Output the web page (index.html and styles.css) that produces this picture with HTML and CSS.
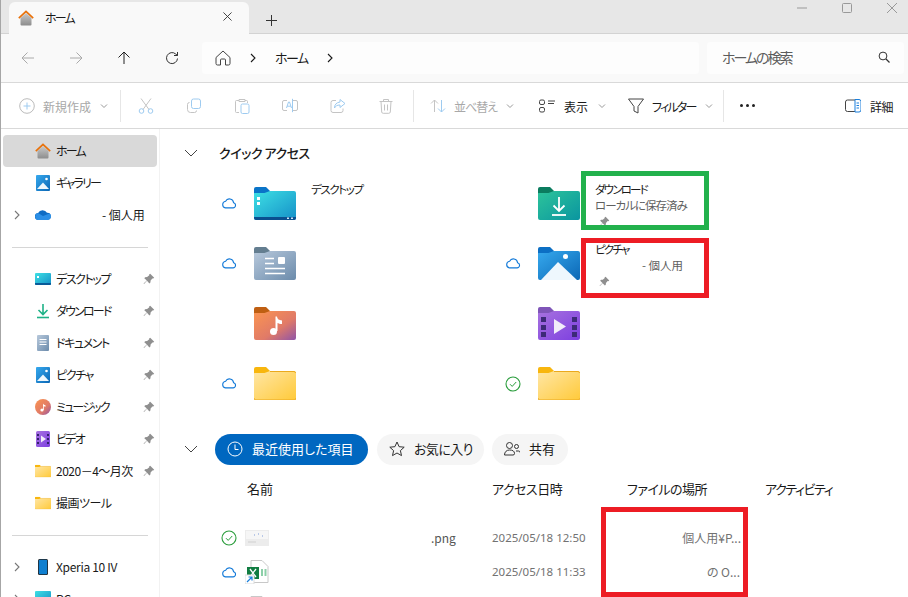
FILE: index.html
```html
<!DOCTYPE html>
<html lang="ja">
<head>
<meta charset="utf-8">
<title>ホーム</title>
<link rel="stylesheet" href="styles.css">
</head>
<body>
<svg class="defs" width="0" height="0" aria-hidden="true">
  <defs>
    <linearGradient id="gYellow" x1="0" y1="0" x2="1" y2="1"><stop offset="0" stop-color="#ffe6a5"/><stop offset="1" stop-color="#ffca3a"/></linearGradient>
    <linearGradient id="gDesk" x1="0" y1="0" x2="1" y2="1"><stop offset="0" stop-color="#3ee0e4"/><stop offset="1" stop-color="#1590c8"/></linearGradient>
    <linearGradient id="gDoc" x1="0" y1="0" x2="1" y2="1"><stop offset="0" stop-color="#b8c9dc"/><stop offset="1" stop-color="#6b8bab"/></linearGradient>
    <linearGradient id="gMusic" x1="0" y1="0" x2="1" y2="1"><stop offset="0" stop-color="#fb9550"/><stop offset=".6" stop-color="#e07a68"/><stop offset="1" stop-color="#8f54a8"/></linearGradient>
    <linearGradient id="gVideo" x1="0" y1="0" x2="1" y2="1"><stop offset="0" stop-color="#a772df"/><stop offset="1" stop-color="#7d3fe0"/></linearGradient>
    <linearGradient id="gDown" x1="0" y1="0" x2="1" y2="1"><stop offset="0" stop-color="#2dc49a"/><stop offset="1" stop-color="#0a95a0"/></linearGradient>
    <linearGradient id="gPic" x1="0" y1="0" x2="1" y2="1"><stop offset="0" stop-color="#36a9ee"/><stop offset="1" stop-color="#0b67b5"/></linearGradient>
    <linearGradient id="gHome" x1="0" y1="0" x2="0" y2="1"><stop offset="0" stop-color="#c9c9c9"/><stop offset="1" stop-color="#8d8d8d"/></linearGradient>
  </defs>
  <symbol id="chevR" viewBox="0 0 10 10"><path d="M3 1l4 4-4 4" fill="none" stroke="currentColor" stroke-width="1.100"/></symbol>
  <symbol id="chevD" viewBox="0 0 14 8"><path d="M1 1l6 6 6-6" fill="none" stroke="currentColor" stroke-width="1"/></symbol>
  <symbol id="chevS" viewBox="0 0 8 6"><path d="M1 1.500l3 3 3-3" fill="none" stroke="currentColor" stroke-width="1"/></symbol>
  <symbol id="pin" viewBox="0 0 12 12"><path d="M7.200.8l4 4-1 .8-.8-.2L7.600 7.600l-.2 2-1 .8-2.400-2.600L1 11l-.4-.4 3.200-3L1.300 5.200l.8-1 2-.2 2.200-1.800-.2-.8z" fill="#8f8f8f"/></symbol>
  <symbol id="cloud" viewBox="0 0 18 14"><path d="M5 12.500h8.500a3 3 0 0 0 .6-5.900A4.700 4.700 0 0 0 5.200 5 3.800 3.800 0 0 0 5 12.500z" fill="none" stroke="#1078d8" stroke-width="1.200"/></symbol>
  <symbol id="check" viewBox="0 0 16 16"><circle cx="8" cy="8" r="7" fill="none" stroke="#2a9d3c" stroke-width="1.100"/><path d="M5 8.200l2.200 2.200L11.200 6" fill="none" stroke="#2a9d3c" stroke-width="1"/></symbol>
  <symbol id="home" viewBox="0 0 16 16"><path d="M2.500 8v6.500a1 1 0 0 0 1 1h9a1 1 0 0 0 1-1V8L8 3z" fill="url(#gHome)"/><path d="M.8 8.200L8 1.500l7.200 6.700" fill="none" stroke="#e8710a" stroke-width="1.700"/></symbol>
  <symbol id="folder" viewBox="0 0 42 33"><path d="M0 2a2 2 0 0 1 2-2h10l4 4v6H0z" fill="#f8b60e"/><path d="M0 6.500q0-.5.500-.5h10L16 4h24a2 2 0 0 1 2 2v25a2 2 0 0 1-2 2H2a2 2 0 0 1-2-2z" fill="url(#gYellow)"/><path d="M0 31a2 2 0 0 0 2 2h38a2 2 0 0 0 2-2" fill="none" stroke="#eaa91d"/><path d="M16 4.500h24a1.500 1.500 0 0 1 1.500 1.500" fill="none" stroke="#eaa91d"/></symbol>
  <symbol id="fDesk" viewBox="0 0 42 33"><path d="M0 2a2 2 0 0 1 2-2h10l4 4v6H0z" fill="#0a74c8"/><path d="M0 6.500q0-.5.500-.5h10L16 4h24a2 2 0 0 1 2 2v25a2 2 0 0 1-2 2H2a2 2 0 0 1-2-2z" fill="url(#gDesk)"/><path d="M0 30h42v1a2 2 0 0 1-2 2H2a2 2 0 0 1-2-2z" fill="#0a4f8f"/><rect x="3" y="10" width="3" height="3" fill="#fff"/><rect x="3" y="15" width="3" height="3" fill="#fff"/><rect x="33" y="30.500" width="2" height="1.500" fill="#cfe6f5"/><rect x="37" y="30.500" width="2" height="1.500" fill="#cfe6f5"/></symbol>
  <symbol id="fDoc" viewBox="0 0 42 33"><path d="M0 2a2 2 0 0 1 2-2h10l4 4v6H0z" fill="#647e90"/><path d="M0 6.500q0-.5.500-.5h10L16 4h24a2 2 0 0 1 2 2v25a2 2 0 0 1-2 2H2a2 2 0 0 1-2-2z" fill="url(#gDoc)"/><path d="M11 11.500h9M11 16.500h9M11 21.500h20M11 26.500h20" stroke="#fff" stroke-width="1.600"/><rect x="24" y="10" width="7" height="7" rx="1" fill="#fff"/></symbol>
  <symbol id="fMusic" viewBox="0 0 42 33"><path d="M0 2a2 2 0 0 1 2-2h10l4 4v6H0z" fill="#bf5f12"/><path d="M0 6.500q0-.5.500-.5h10L16 4h24a2 2 0 0 1 2 2v25a2 2 0 0 1-2 2H2a2 2 0 0 1-2-2z" fill="url(#gMusic)"/><circle cx="19.500" cy="24.500" r="3.500" fill="#fff"/><path d="M21.500 24V9.500h1.500c.5 3 2 3.500 5 4v3.500c-2 0-3.500-.5-4.500-1V24z" fill="#fff"/></symbol>
  <symbol id="fVideo" viewBox="0 0 42 33"><path d="M0 2a2 2 0 0 1 2-2h10l4 4v6H0z" fill="#7f55b8"/><path d="M0 6.500q0-.5.500-.5h10L16 4h24a2 2 0 0 1 2 2v25a2 2 0 0 1-2 2H2a2 2 0 0 1-2-2z" fill="url(#gVideo)"/><path d="M3 10h5v5H3zM3 18h5v5H3zM3 25h5v5H3zM34 10h5v5h-5zM34 18h5v5h-5zM34 25h5v5h-5z" fill="#3d2a78"/><path d="M16 12l12 7.500L16 27z" fill="#f1edf9"/></symbol>
  <symbol id="fDown" viewBox="0 0 42 33"><path d="M0 2a2 2 0 0 1 2-2h10l4 4v6H0z" fill="#0b7c5f"/><path d="M0 6.500q0-.5.500-.5h10L16 4h24a2 2 0 0 1 2 2v25a2 2 0 0 1-2 2H2a2 2 0 0 1-2-2z" fill="url(#gDown)"/><path d="M21 10v14M15.500 18.500L21 24l5.500-5.500" fill="none" stroke="#fff" stroke-width="1.800"/><path d="M14 28h14" stroke="#fff" stroke-width="1.800"/></symbol>
  <symbol id="fPic" viewBox="0 0 42 33"><path d="M0 2a2 2 0 0 1 2-2h10l4 4v6H0z" fill="#0c6fc4"/><path d="M0 6.500q0-.5.500-.5h10L16 4h24a2 2 0 0 1 2 2v25a2 2 0 0 1-2 2H2a2 2 0 0 1-2-2z" fill="url(#gPic)"/><path d="M3 33L20 15l19 18z" fill="#eef7fd"/><circle cx="27.500" cy="9.500" r="2.500" fill="#fff"/></symbol>
  <symbol id="sDesk" viewBox="0 0 16 12"><rect width="16" height="12" rx="1" fill="url(#gDesk)"/><path d="M0 10h16v1a1 1 0 0 1-1 1H1a1 1 0 0 1-1-1z" fill="#0a5a98"/><rect x="2" y="3" width="2" height="2" fill="#fff"/></symbol>
  <symbol id="sDown" viewBox="0 0 16 16"><path d="M8 1v10M3.500 7L8 11.500 12.500 7" fill="none" stroke="#1fb287" stroke-width="1.600"/><path d="M2 14.500h12" stroke="#1fb287" stroke-width="1.600"/></symbol>
  <symbol id="sDoc" viewBox="0 0 12 16"><rect width="12" height="16" rx="1" fill="url(#gDoc)"/><path d="M2.500 4.500h7M2.500 7h7M2.500 9.500h7" stroke="#fff"/></symbol>
  <symbol id="sPic" viewBox="0 0 16 16"><rect width="14" height="16" x="1" rx="1" fill="url(#gPic)"/><path d="M2 14L8 7.500 14 14z" fill="#eef7fd"/><circle cx="11.500" cy="4" r="1.300" fill="#fff"/></symbol>
  <symbol id="sMusic" viewBox="0 0 16 16"><circle cx="8" cy="8" r="8" fill="url(#gMusic)"/><circle cx="7" cy="11" r="1.600" fill="#fff"/><path d="M8 11V4.500c.5 1 1.500 1.500 2.500 1.800v1.400C9.700 7.500 9 7.300 8.800 7V11z" fill="#fff"/></symbol>
  <symbol id="sVideo" viewBox="0 0 16 16"><rect width="14" height="16" x="1" rx="1.500" fill="url(#gVideo)"/><path d="M2 3h2v2H2zM2 7h2v2H2zM2 11h2v2H2zM12 3h2v2h-2zM12 7h2v2h-2zM12 11h2v2h-2z" fill="#33226c"/><path d="M6 4.500L11 8l-5 3.500z" fill="#f1edf9"/></symbol>
</svg>

<div class="window">
  <header class="tabbar">
    <div class="tab">
      <svg class="i16"><use href="#home"/></svg>
      <span class="tab-title k">ホーム</span>
      <svg class="tab-x" viewBox="0 0 10 10"><path d="M.5.500l9 9M9.500.500l-9 9" stroke="#333" fill="none"/></svg>
    </div>
    <svg class="tab-plus" viewBox="0 0 11 11"><path d="M5.500 0v11M0 5.500h11" stroke="#333" fill="none"/></svg>
    <div class="winctl">
      <svg class="ctl" viewBox="0 0 10 10"><path d="M0 5h10" stroke="#999" fill="none"/></svg>
      <svg class="ctl" viewBox="0 0 10 10"><rect x=".5" y=".5" width="9" height="9" rx="1" stroke="#999" fill="none"/></svg>
      <svg class="ctl" viewBox="0 0 10 10"><path d="M0 0l10 10M10 0L0 10" stroke="#999" fill="none"/></svg>
    </div>
  </header>

  <div class="addr">
    <button class="nav"><svg class="i14" viewBox="0 0 14 14"><path d="M13 7H1M6.500 1.500L1 7l5.500 5.500" fill="none" stroke="#aaa"/></svg></button>
    <button class="nav"><svg class="i14" viewBox="0 0 14 14"><path d="M1 7h12M7.500 1.500L13 7l-5.500 5.500" fill="none" stroke="#aaa"/></svg></button>
    <button class="nav"><svg class="i14" viewBox="0 0 14 14"><path d="M7 13V1M1.500 6.500L7 1l5.500 5.500" fill="none" stroke="#222"/></svg></button>
    <button class="nav"><svg class="i14" viewBox="0 0 14 14"><path d="M12.500 7.500a5.500 5.500 0 1 1-1.800-4.500L12.500 4.500M12.500 1v3.500H9" fill="none" stroke="#333"/></svg></button>
    <div class="crumbs">
      <svg class="crumb-home" viewBox="0 0 16 16"><path d="M1 7.500L8 1l7 6.500v6a1.500 1.500 0 0 1-1.500 1.500h-3V10a1 1 0 0 0-1-1h-3a1 1 0 0 0-1 1v5h-3A1.500 1.500 0 0 1 1 13.500z" fill="none" stroke="#444"/></svg>
      <svg class="crumb-chev"><use href="#chevR"/></svg>
      <span class="crumb-text">ホーム</span>
      <svg class="crumb-chev"><use href="#chevR"/></svg>
    </div>
    <div class="search">
      <span class="search-text">ホームの検索</span>
      <svg class="i12" viewBox="0 0 12 12"><circle cx="5" cy="5" r="3.900" fill="none" stroke="#333"/><path d="M8 8l3.500 3.500" stroke="#333" stroke-width="1.200"/></svg>
    </div>
  </div>

  <div class="toolbar">
    <div class="tb-item tb-new dim">
      <svg class="i16" viewBox="0 0 16 16"><circle cx="8" cy="8" r="7.300" fill="none" stroke="#bbb"/><path d="M8 4.500v7M4.500 8h7" stroke="#9ecbf0" fill="none"/></svg>
      <span>新規作成</span>
      <svg class="chev-s"><use href="#chevS"/></svg>
    </div>
    <i class="tb-sep"></i>
    <div class="tb-icons">
      <button class="tb-ic"><svg class="i16" viewBox="0 0 16 16"><path d="M3 .5l8 11M13 .5l-8 11" stroke="#c4c4c4" fill="none"/><circle cx="3.500" cy="13" r="2.300" fill="none" stroke="#9ecbf0"/><circle cx="12.500" cy="13" r="2.300" fill="none" stroke="#9ecbf0"/></svg></button>
      <button class="tb-ic"><svg class="i16" viewBox="0 0 16 16"><rect x="5.500" y="1" width="9" height="9.500" rx="2" fill="none" stroke="#9ecbf0"/><path d="M3.500 4.500A2 2 0 0 0 1.500 6.500v5a3 3 0 0 0 3 3h4a2 2 0 0 0 2-2" fill="none" stroke="#c4c4c4"/></svg></button>
      <button class="tb-ic"><svg class="i16" viewBox="0 0 16 16"><path d="M5 2.500H2.500a1 1 0 0 0-1 1v10a1 1 0 0 0 1 1H5M11 2.500h1.500a1 1 0 0 1 1 1v1.500M5 1.500h6v2H5z" fill="none" stroke="#c4c4c4"/><rect x="7" y="6" width="8" height="9.500" rx="1.500" fill="none" stroke="#9ecbf0"/></svg></button>
      <button class="tb-ic"><svg class="i16" viewBox="0 0 16 16"><path d="M5 2.500H2a1.500 1.500 0 0 0-1.500 1.500v7A1.500 1.500 0 0 0 2 12.500h3M11 2.500h3A1.500 1.500 0 0 1 15.500 4v7a1.500 1.500 0 0 1-1.500 1.500h-3" fill="none" stroke="#c4c4c4"/><path d="M4.500 10l2-6h1l2 6M5.200 8.200h3.600M10.500 .8v13.400" fill="none" stroke="#9ecbf0"/></svg></button>
      <button class="tb-ic"><svg class="i16" viewBox="0 0 16 16"><path d="M6 2.500H3a2 2 0 0 0-2 2v8a2 2 0 0 0 2 2h8a2 2 0 0 0 2-2v-2" fill="none" stroke="#c4c4c4"/><path d="M10 1.500l5 4-5 4V7c-3 0-4.500 1-5.500 3 0-3.500 2-5.500 5.500-6z" fill="none" stroke="#9ecbf0"/></svg></button>
      <button class="tb-ic"><svg class="i16" viewBox="0 0 16 16"><path d="M1.500 3.500h13M5.500 3.500V1.500h5v2M3 3.500l.7 10.500a1.500 1.500 0 0 0 1.500 1.300h5.600a1.500 1.500 0 0 0 1.500-1.300L13 3.500M6.500 6.500v6M9.500 6.500v6" fill="none" stroke="#c4c4c4"/></svg></button>
    </div>
    <i class="tb-sep"></i>
    <div class="tb-item tb-sort dim">
      <svg class="i16" viewBox="0 0 16 16"><path d="M4.500 14V2M1 5.500L4.500 2 8 5.500" fill="none" stroke="#c4c4c4"/><path d="M11.500 2v12M8 10.500l3.500 3.500 3.500-3.500" fill="none" stroke="#9ecbf0"/></svg>
      <span class="sort-text">並べ替え</span>
      <svg class="chev-s"><use href="#chevS"/></svg>
    </div>
    <div class="tb-item tb-view">
      <svg class="i16" viewBox="0 0 16 16"><rect x=".5" y="2" width="5" height="4.500" rx="1.500" fill="none" stroke="#444"/><rect x=".5" y="9.500" width="5" height="4.500" rx="1.500" fill="none" stroke="#444"/><path d="M9 3h7M9 5.500h6" stroke="#444" fill="none"/></svg>
      <span>表示</span>
      <svg class="chev-s"><use href="#chevS"/></svg>
    </div>
    <div class="tb-item tb-filter">
      <svg class="i16" viewBox="0 0 16 16"><path d="M.5 1h15L10 8.500V15l-4-2V8.500z" fill="none" stroke="#444"/></svg>
      <span class="k">フィルター</span>
      <svg class="chev-s"><use href="#chevS"/></svg>
    </div>
    <i class="tb-sep"></i>
    <div class="more"><b></b><b></b><b></b></div>
    <div class="tb-item tb-details">
      <svg class="i16" viewBox="0 0 16 14"><rect x=".5" y="1" width="15" height="11.500" rx="2" fill="none" stroke="#444"/><path d="M10 .5h4a2 2 0 0 1 2 2V11a2 2 0 0 1-2 2h-4z" fill="#fff" stroke="#1a7fdc"/><path d="M11.500 4h2.500M11.500 6.500h2.500M11.500 9h2.500" stroke="#1a7fdc"/></svg>
      <span>詳細</span>
    </div>
  </div>

  <div class="body">
    <nav class="sidebar">
      <div class="row active"><svg class="ni"><use href="#home"/></svg><span class="k">ホーム</span></div>
      <div class="row"><svg class="ni"><use href="#sPic"/></svg><span class="k">ギャラリー</span></div>
      <div class="row"><svg class="exp"><use href="#chevR"/></svg><svg class="ni" viewBox="0 0 16 10"><path d="M3.500 10a3.500 3.500 0 0 1-.4-7A5 5 0 0 1 12 2.800 3.600 3.600 0 0 1 12.500 10z" fill="#0f6cc4"/><path d="M3.500 10a3.500 3.500 0 0 1-.6-6.900L8 6l6.500-2.500A3.600 3.600 0 0 1 12.500 10z" fill="#2c8fe6"/></svg><span class="cloud-name">- 個人用</span></div>
      <hr class="rule">
      <div class="row"><svg class="ni"><use href="#sDesk"/></svg><span class="k-s">デスクトップ</span><svg class="rpin"><use href="#pin"/></svg></div>
      <div class="row"><svg class="ni"><use href="#sDown"/></svg><span class="k">ダウンロード</span><svg class="rpin"><use href="#pin"/></svg></div>
      <div class="row"><svg class="ni"><use href="#sDoc"/></svg><span class="k-s">ドキュメント</span><svg class="rpin"><use href="#pin"/></svg></div>
      <div class="row"><svg class="ni"><use href="#sPic"/></svg><span class="k-s">ピクチャ</span><svg class="rpin"><use href="#pin"/></svg></div>
      <div class="row"><svg class="ni"><use href="#sMusic"/></svg><span class="k">ミュージック</span><svg class="rpin"><use href="#pin"/></svg></div>
      <div class="row"><svg class="ni"><use href="#sVideo"/></svg><span class="k">ビデオ</span><svg class="rpin"><use href="#pin"/></svg></div>
      <div class="row"><svg class="ni" viewBox="0 0 42 33"><use href="#folder"/></svg><span class="loose">2020－4～月次</span><svg class="rpin"><use href="#pin"/></svg></div>
      <div class="row"><svg class="ni" viewBox="0 0 42 33"><use href="#folder"/></svg><span class="loose">撮画ツール</span></div>
      <hr class="rule">
      <div class="row"><svg class="exp"><use href="#chevR"/></svg><svg class="ni" viewBox="0 0 16 16"><rect x="3" width="10" height="16" rx="1.500" fill="#222"/><rect x="3.800" y=".8" width="8.400" height="14.400" rx="1" fill="#0f7fd0"/></svg><span class="xperia">Xperia 10 IV</span></div>
      <div class="row"><svg class="exp"><use href="#chevR"/></svg><svg class="ni" viewBox="0 0 16 16"><rect width="16" height="12" rx="1" fill="url(#gDesk)"/></svg><span>PC</span></div>
    </nav>

    <main class="content">
      <div class="sec-head">
        <svg class="sec-chev"><use href="#chevD"/></svg>
        <h2>クイック アクセス</h2>
      </div>
      <div class="quick">
        <div class="qi"><svg class="st"><use href="#cloud"/></svg><svg class="fd"><use href="#fDesk"/></svg><div class="qt"><div class="k-s">デスクトップ</div></div></div>
        <div class="qi"><span class="st"></span><svg class="fd"><use href="#fDown"/></svg><div class="qt"><div class="k">ダウンロード</div><div class="sub tight">ローカルに保存済み</div><svg class="qpin"><use href="#pin"/></svg></div></div>
        <div class="qi"><svg class="st"><use href="#cloud"/></svg><svg class="fd"><use href="#fDoc"/></svg><div class="qt"></div></div>
        <div class="qi"><svg class="st"><use href="#cloud"/></svg><svg class="fd"><use href="#fPic"/></svg><div class="qt"><div class="k">ピクチャ</div><div class="sub sub-in">- 個人用</div><svg class="qpin"><use href="#pin"/></svg></div></div>
        <div class="qi"><span class="st"></span><svg class="fd"><use href="#fMusic"/></svg><div class="qt"></div></div>
        <div class="qi"><span class="st"></span><svg class="fd"><use href="#fVideo"/></svg><div class="qt"></div></div>
        <div class="qi"><svg class="st"><use href="#cloud"/></svg><svg class="fd"><use href="#folder"/></svg><div class="qt"></div></div>
        <div class="qi"><svg class="st st-check"><use href="#check"/></svg><svg class="fd"><use href="#folder"/></svg><div class="qt"></div></div>
      </div>

      <div class="sec-head pills-head">
        <svg class="sec-chev"><use href="#chevD"/></svg>
        <div class="pills">
          <div class="pill on"><svg class="i16" viewBox="0 0 16 16"><circle cx="8" cy="8" r="7" fill="none" stroke="#fff"/><path d="M8 3.500V8.500h3.500" fill="none" stroke="#fff"/></svg><span>最近使用した項目</span></div>
          <div class="pill"><svg class="i16" viewBox="0 0 16 16"><path d="M8 1l2.100 4.700 5.100.5-3.800 3.400 1.100 5L8 12l-4.500 2.600 1.100-5L.8 6.200l5.100-.5z" fill="none" stroke="#333"/></svg><span class="pill-fav">お気に入り</span></div>
          <div class="pill"><svg class="i16" viewBox="0 0 16 16"><circle cx="5.500" cy="4.500" r="3" fill="none" stroke="#333"/><path d="M.5 14c0-3 2-5 5-5s5 1 5 3.500q0 1.500-1.500 1.500z" fill="none" stroke="#333"/><circle cx="12.500" cy="5.500" r="2" fill="none" stroke="#333"/><path d="M12 10h2.500q1.500 0 1.500 1.500" fill="none" stroke="#333"/></svg><span>共有</span></div>
        </div>
      </div>

      <div class="thead">
        <span class="th-name">名前</span><span class="loose">アクセス日時</span><span class="loose">ファイルの場所</span><span class="k-s">アクティビティ</span>
      </div>
      <div class="trow">
        <div class="namecell"><svg class="st st-check"><use href="#check"/></svg>
          <svg class="thumb" viewBox="0 0 24 16"><rect width="24" height="16" fill="#ececec"/><rect x="1" y="1" width="22" height="8" fill="#f6f6f6"/><path d="M9 5h1M13 4h1M17 6h1" stroke="#7d9bd8"/><path d="M3 12h8" stroke="#d0d0d0"/></svg>
          <span class="ext">.png</span></div>
        <span class="date">2025/05/18 12:50</span><span class="loc">個人用¥P...</span>
      </div>
      <div class="trow">
        <div class="namecell"><svg class="st"><use href="#cloud"/></svg>
          <svg class="thumb" viewBox="0 0 24 24"><path d="M6 .5h11l6 6v16H6z" fill="#fff" stroke="#c8c8c8"/><rect x="2" y="7" width="12" height="12" fill="#107c41"/><path d="M5 9l6 8M11 9l-6 8" stroke="#fff" stroke-width="1.300"/><path d="M16 9h2v7h-2zM19.500 9h2v7h-2z" fill="#8ccfa8"/><rect y="15" width="9" height="9" fill="#fff" stroke="#ddd"/><path d="M2 22l5-5M3.500 17H7v3.500" fill="none" stroke="#1a7fdc" stroke-width="1.200"/></svg>
        </div>
        <span class="date">2025/05/18 11:33</span><span class="loc loc-2">の O...</span>
      </div>
      <div class="trow">
        <div class="namecell"><span class="st"></span>
          <svg class="thumb thumb-doc" viewBox="0 0 24 24"><path d="M6 .5h11l6 6v16H6z" fill="#fff" stroke="#c8c8c8"/></svg>
        </div>
      </div>
    </main>
  </div>

  <div class="mark mark-green"></div>
  <div class="mark mark-red1"></div>
  <div class="mark mark-red2"></div>
</div>
</body>
</html>
```
FILE: styles.css
```css
* { box-sizing: border-box; }
html, body { margin: 0; height: 100%; overflow: hidden; background: #fff; }
body { font: 12px/16px "Noto Sans CJK JP", "Noto Sans", sans-serif; color: #1a1a1a; font-feature-settings: "palt"; }
.defs { position: absolute; }
button { border: 0; background: none; padding: 0; display: flex; align-items: center; justify-content: center; }
svg { display: block; flex: none; }
span { white-space: nowrap; }
.i16 { width: 16px; height: 16px; }
.i14 { width: 14px; height: 14px; }
.i12 { width: 12px; height: 12px; }
.k { letter-spacing: -1.800px; }
.k-s { letter-spacing: -1.400px; }
.tight { letter-spacing: -1px; }
.loose { letter-spacing: -.500px; }
.xperia { letter-spacing: -.300px; }

.window { position: relative; height: 597px; width: 908px; border-left: 1px solid #a6a6a6; overflow: hidden; }

.tabbar { height: 34px; background: #e7e7e7; border-bottom: 1px solid #d3d3d3; display: flex; align-items: flex-start; padding: 2px 0 0 8px; }
.tab { width: 240px; height: 32px; background: #f9f9f9; border-radius: 6px 6px 0 0; display: flex; align-items: center; padding: 0 17px 0 9px; gap: 11px; }
.tab-title { flex: 1; font-size: 12px; }
.tab-x { width: 9px; height: 9px; margin-top: -3px; }
.tab-plus { width: 11px; height: 11px; margin: 13px 0 0 17px; }
.winctl { margin-left: auto; display: flex; gap: 35px; padding: 1px 11px 0 0; }
.ctl { width: 10px; height: 10px; }

.addr { height: 49px; background: #f9f9f9; border-bottom: 1px solid #d9d9d9; display: flex; align-items: center; padding: 0 3px 1px 3px; }
.nav { width: 48px; height: 32px; }
.crumbs { width: 497px; height: 32px; margin-left: 6px; background: #fdfdfd; border-radius: 4px; display: flex; align-items: center; padding-left: 13px; }
.crumb-home { width: 16px; height: 16px; margin-right: 17px; }
.crumb-chev { width: 10px; height: 10px; }
.crumb-text { font-size: 13px; letter-spacing: -1.500px; margin: 0 17px 0 17px; }
.search { width: 197px; height: 32px; margin-left: 8px; background: #fdfdfd; border-radius: 4px; display: flex; align-items: center; justify-content: space-between; padding: 0 14px 2px 15px; font-size: 14px; color: #5c5c5c; }
.search-text { letter-spacing: -2px; }

.toolbar { height: 46px; background: #fff; border-bottom: 1px solid #d9d9d9; display: flex; align-items: center; padding-left: 18px; }
.tb-item { display: flex; align-items: center; gap: 8px; }
.tb-item span { position: relative; top: 1px; }
.dim { color: #a8a8a8; }
.chev-s { width: 8px; height: 6px; color: #999; margin-left: 1px; }
.tb-new { width: 101px; }
.tb-sep { width: 1px; height: 32px; background: #e6e6e6; display: block; }
.tb-icons { display: flex; width: 292px; padding-left: 1px; }
.tb-ic { width: 48px; height: 32px; }
.tb-sort { width: 87px; margin-left: 16px; }
.sort-text { letter-spacing: -1px; }
.tb-view { margin-left: 22px; width: 89px; gap: 9px; }
.tb-filter { width: 95px; }
.more { display: flex; gap: 3px; margin-left: 16px; width: 105px; }
.more b { width: 3px; height: 3px; border-radius: 50%; background: #222; }
.tb-details { gap: 9px; }
.tb-details span { letter-spacing: -.500px; }

.body { display: flex; height: 468px; overflow: hidden; }
.sidebar { width: 159px; flex: none; border-right: 1px solid #f2f2f2; padding: 6px 2px 0 2px; }
.row { height: 32px; display: flex; align-items: center; position: relative; padding-left: 32px; border-radius: 4px; }
.row.active { background: #d9d9d9; }
.ni { width: 16px; height: 16px; margin-right: 5px; }
.exp { position: absolute; left: 9px; top: 11px; width: 10px; height: 10px; color: #777; }
.rpin { position: absolute; right: 2px; top: 10px; width: 12px; height: 12px; }
.cloud-name { margin-left: 46px; }
.rule { height: 1px; border: 0; background: #d6d6d6; margin: 16px 9px 15px 9px; }

.content { flex: 1; padding: 12px 0 0 19px; min-width: 0; }
.sec-head { display: flex; align-items: center; height: 24px; }
.sec-chev { width: 14px; height: 8px; margin: 0 21px 0 5px; color: #444; }
h2 { margin: 0; font-size: 13px; font-weight: 500; letter-spacing: -.500px; }
.quick { display: grid; grid-template-columns: 284px 284px; grid-auto-rows: 60px; margin: 9px 0 0 36px; }
.qi { display: flex; align-items: flex-start; padding-top: 13px; }
.st { width: 16px; height: 14px; margin: 9px 12px 0 6px; }
.st-check { height: 16px; }
.fd { width: 42px; height: 33px; margin-left: 5px; }
.qt { margin: -6px 0 0 15px; position: relative; font-size: 11.500px; }
.sub { color: #5f5f5f; }
.sub-in { padding-left: 47px; }
.qpin { width: 11px; height: 11px; margin: 3px 0 0 4px; }

.pills-head { height: 32px; margin-top: 19px; }
.pills-head .sec-chev { margin-right: 17px; }
.pills { display: flex; gap: 9px; }
.pills .pill:nth-child(2) { width: 107px; }
.pills .pill:nth-child(3) { width: 76px; margin-left: -1px; }
.pill { height: 31px; width: 153px; border-radius: 16px; background: #f5f5f5; display: flex; align-items: center; gap: 9px; padding-left: 12px; font-size: 13px; }
.pill.on { background: #0067c0; color: #fff; }
.pill-fav { letter-spacing: -.600px; }

.thead { display: grid; grid-template-columns: 277px 135px 138px 1fr; height: 30px; margin: 9px 0 17px 36px; align-items: center; font-size: 13px; }
.th-name { padding-left: 32px; }
.trow { display: grid; grid-template-columns: 277px 135px 114px; height: 34px; margin-left: 36px; align-items: center; font-size: 12px; color: #727272; }
.namecell { display: flex; align-items: center; position: relative; }
.namecell .st { margin: 0 8px 0 6px; }
.thumb { width: 24px; height: 24px; }
.thumb-doc { margin-top: 3px; }
.ext { position: absolute; left: 216px; color: #555; }
.date { font-family: "Noto Sans", sans-serif; font-size: 11.500px; }
.loc { text-align: right; }
.loc-2 { padding-right: 1px; }

.mark { position: absolute; border: 5px solid #ed1c24; pointer-events: none; }
.mark-green { left: 580px; top: 171px; width: 128px; height: 59px; border-color: #22b14c; }
.mark-red1 { left: 580px; top: 238px; width: 128px; height: 60px; }
.mark-red2 { left: 600px; top: 507px; width: 147px; height: 90px; }
```
